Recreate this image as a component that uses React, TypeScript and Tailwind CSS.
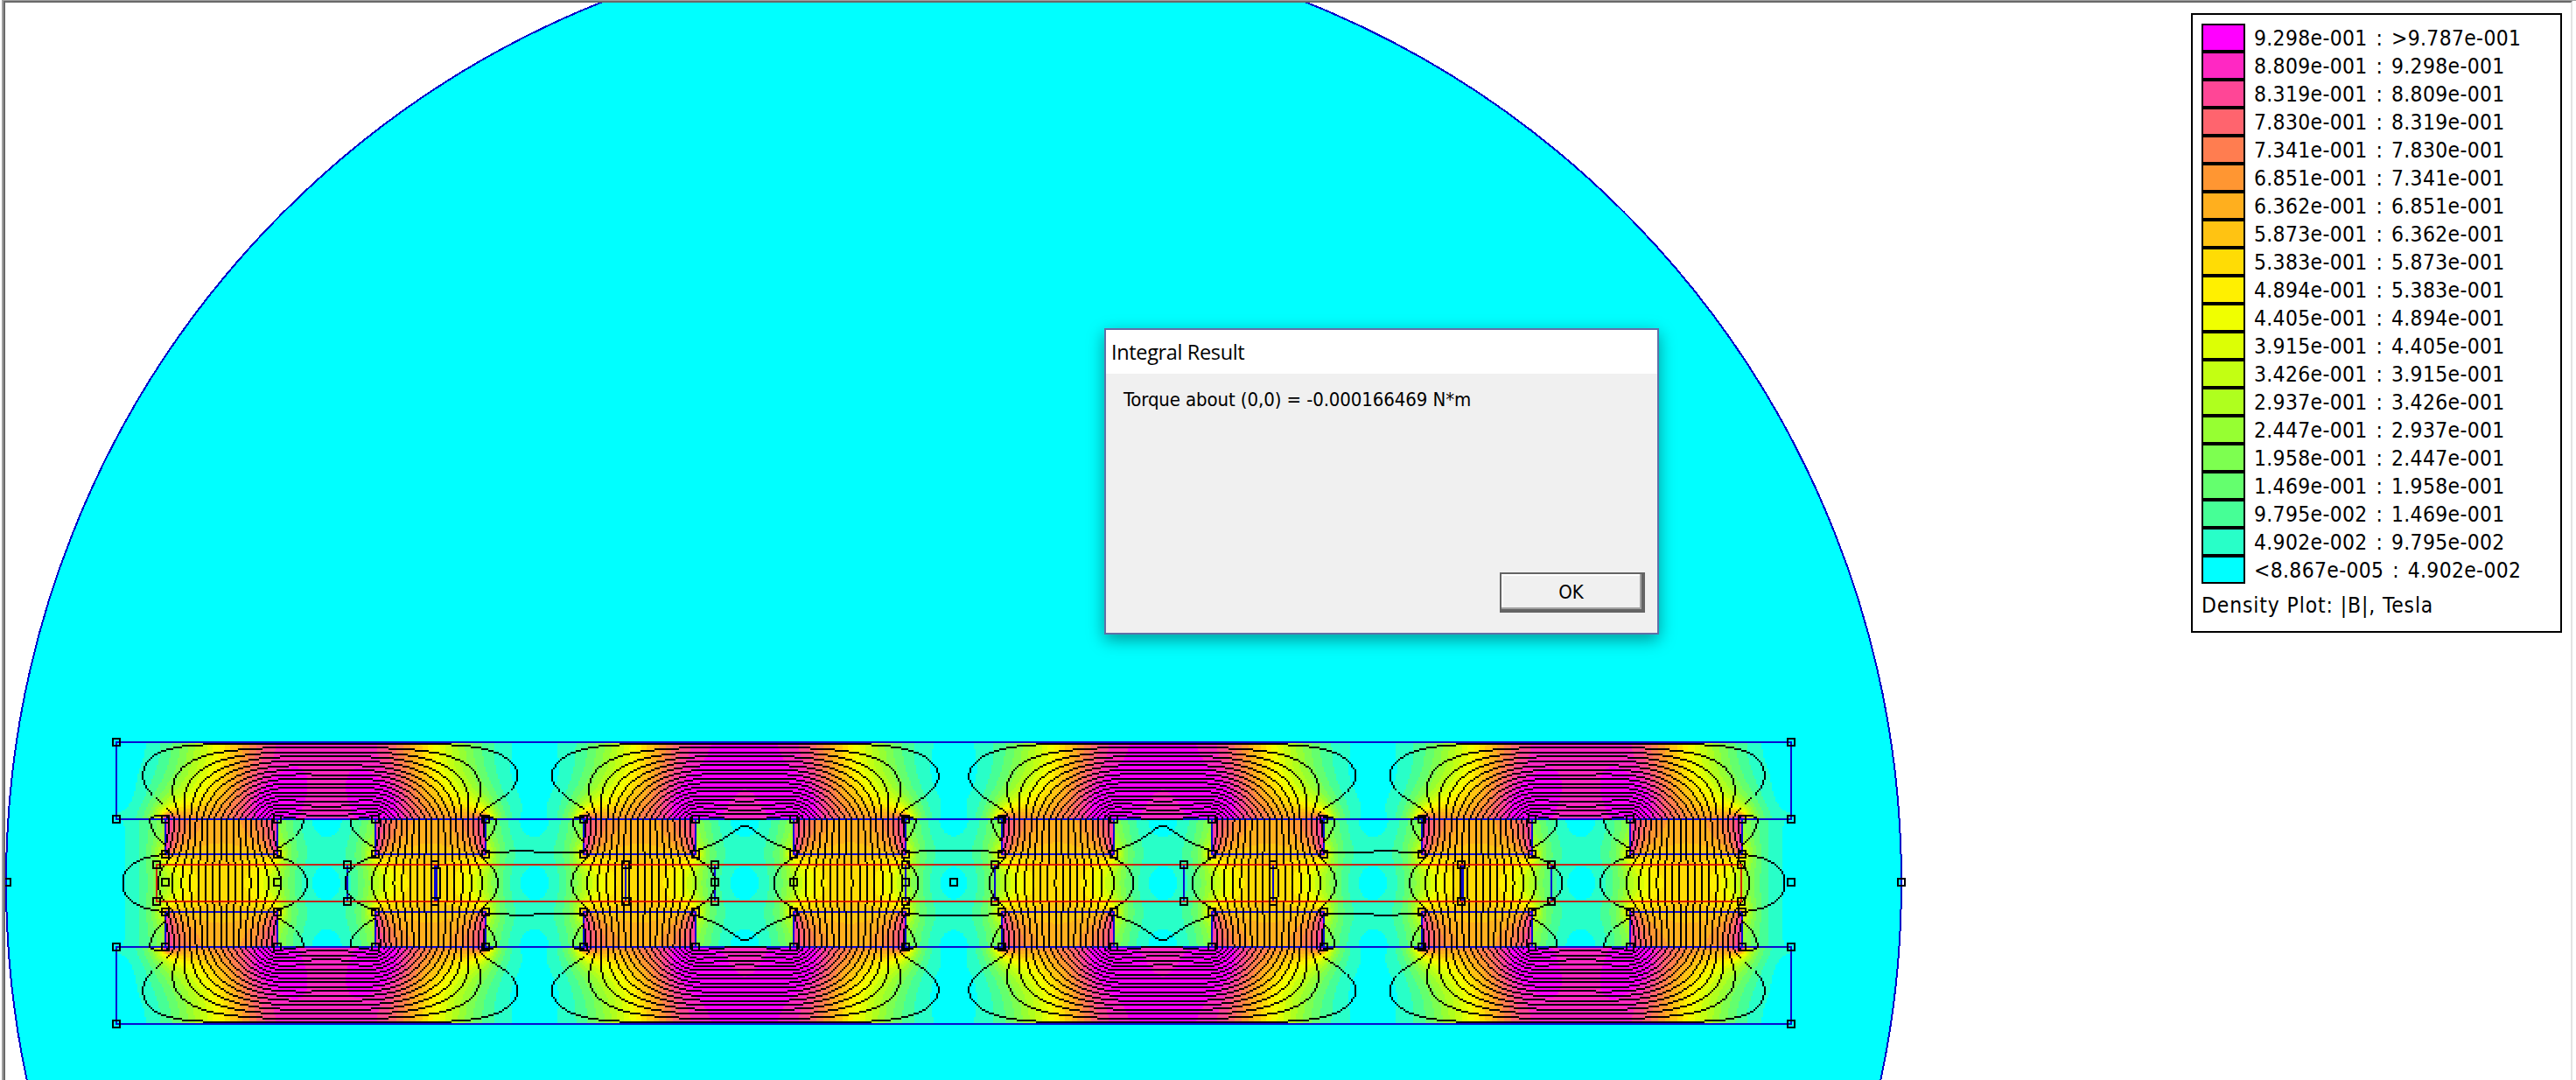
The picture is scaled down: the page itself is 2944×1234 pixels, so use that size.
const COLORS = [
  '#00ffff', '#28ffc8', '#46ff96', '#64ff6e', '#7dff50', '#96ff32', '#afff1e', '#c3ff12', '#dcff05', '#f0ff00',
  '#fff000', '#ffdc05', '#ffc312', '#ffaf1e', '#ff9632', '#ff7d50', '#ff646e', '#ff4696', '#ff28c3', '#ff00ff',
];

const LEGEND = [
  '9.298e-001 : >9.787e-001', '8.809e-001 : 9.298e-001', '8.319e-001 : 8.809e-001', '7.830e-001 : 8.319e-001',
  '7.341e-001 : 7.830e-001', '6.851e-001 : 7.341e-001', '6.362e-001 : 6.851e-001', '5.873e-001 : 6.362e-001',
  '5.383e-001 : 5.873e-001', '4.894e-001 : 5.383e-001', '4.405e-001 : 4.894e-001', '3.915e-001 : 4.405e-001',
  '3.426e-001 : 3.915e-001', '2.937e-001 : 3.426e-001', '2.447e-001 : 2.937e-001', '1.958e-001 : 2.447e-001',
  '1.469e-001 : 1.958e-001', '9.795e-002 : 1.469e-001', '4.902e-002 : 9.795e-002', '<8.867e-005 : 4.902e-002',
];

// Geometry, in plot pixels
const MAGNETS = [[189, 317], [429, 555], [667, 795], [907, 1035], [1145, 1273], [1385, 1513], [1625, 1751], [1863, 1991]];
const STRENGTH = [1.004, -1, 1.004, -1];
const CX2 = 2180;
const CY2 = 2018;

// Finite-difference solution of the vector potential on one quarter of the machine.
// Nodes lie every 2px; the two symmetry planes are natural boundaries.
const X0 = 31;
const Y0 = 768;
const NX = (1089 - X0) / 2 + 1;
const NY = (1008 - Y0) / 2 + 1;
const PROBE = Math.round((253 - X0) / 2);

const cellB = (A: Float64Array, i: number, j: number) => {
  const k = j * NX + i;
  const a = A[k], b = A[k + 1], c = A[k + NX], d = A[k + NX + 1];
  return Math.hypot((b - a + d - c) / 2, (c - a + d - b) / 2);
};

function solve() {
  const nu = new Float64Array(NX * NY).fill(1);
  const src = new Float64Array(NX * NY);
  const iron: number[][] = [];
  for (let j = 0; j < NY; j++) {
    const y = Y0 + 2 * j + 1;
    for (let i = 0; i < NX; i++) {
      const x = X0 + 2 * i + 1;
      if (y > 848 && y < 936 && x > 133) {
        nu[j * NX + i] = 1 / 3000;
        if (i < NX - 1) iron.push([i, j]);
      }
      if (y > 936 && y < 976) {
        MAGNETS.slice(0, 4).forEach(([a, b], m) => {
          const s = STRENGTH[m];
          if (x > a && x < b) nu[j * NX + i] = 1 / 1.05;
          const n = X0 + 2 * i;
          if (n === a) { src[j * NX + i] += s; src[(j + 1) * NX + i] += s; }
          if (n === b) { src[j * NX + i] -= s; src[(j + 1) * NX + i] -= s; }
        });
      }
    }
  }
  const A = new Float64Array(NX * (NY + 1));
  const E = new Float64Array(NX * NY);
  const S = new Float64Array(NX * NY);
  const couple = () => {
    for (let j = 1; j < NY; j++)
      for (let i = 1; i < NX; i++) {
        const k = j * NX + i;
        E[k] = i < NX - 1 ? (nu[k] + nu[k - NX]) / 2 : 0;
        S[k] = j < NY - 1 ? (nu[k] + nu[k - 1]) / 2 : 0;
      }
    for (let j = 1; j < NY; j++) E[j * NX] = 1;
    for (let i = 1; i < NX; i++) S[i] = 1;
  };
  const w = 1.987;
  for (let pass = 0; pass < 22; pass++) {
    couple();
    const sweeps = pass === 0 ? 1500 : 300;
    for (let it = 0; it < sweeps; it++)
      for (let j = 1; j < NY; j++)
        for (let i = 1; i < NX; i++) {
          const k = j * NX + i;
          const e = E[k], l = E[k - 1], s = S[k], n = S[k - NX];
          const v = l * A[k - 1] + n * A[k - NX] + e * A[k + 1] + s * A[k + NX] + src[k];
          A[k] += w * (v / (e + l + s + n) - A[k]);
        }
    // soft saturation of the yoke steel, driven by the local field strength
    if (pass < 18) {
      const scale = 0.572 / cellB(A, PROBE, NY - 3);
      for (const [i, j] of iron) {
        const k = j * NX + i;
        const h = cellB(A, i, j) * scale * nu[k] * 6000;
        const next = (1 + (h / 1.2) ** 2.2) ** (1 / 2.2) / 6000;
        nu[k] = Math.sqrt(nu[k] * next);
      }
    }
  }
  return A;
}

function build() {
  const A = solve();
  const at = (i: number, j: number) => A[Math.min(j, NY - 1) * NX + Math.min(i, NX - 1)];
  const scale = 0.572 / cellB(A, PROBE, NY - 3);

  const bands = COLORS.map(() => '');
  const put = (n: number, x: number, y: number, len: number) => {
    const r = `h${len}v2h${-len}z`;
    bands[n] += `M${x} ${y}${r}M${x} ${CY2 - y - 2}${r}M${CX2 - x - len} ${y}${r}M${CX2 - x - len} ${CY2 - y - 2}${r}`;
  };
  for (let j = 0; j < NY; j++) {
    let start = 0;
    let prev = -1;
    for (let i = 0; i <= NX; i++) {
      const b = cellB(A, Math.min(i, NX - 2), Math.min(j, NY - 2)) * scale;
      const n = i === NX ? -1 : Math.min(19, Math.floor(b / 0.04893));
      if (n !== prev) {
        if (prev > 0) put(prev, X0 + 2 * start, Y0 + 2 * j, 2 * (i - start));
        start = i;
        prev = n;
      }
    }
  }

  let lo = 0;
  let hi = 0;
  for (const v of A) { if (v < lo) lo = v; if (v > hi) hi = v; }
  const step = (hi - lo) / 20;
  lo += step * 0.25;
  const seen = new Set<number>();
  let lines = '';
  const dot = (i: number, j: number) => {
    const k = j * NX + i;
    if (seen.has(k)) return;
    seen.add(k);
    const x = X0 + 2 * i - 1, y = Y0 + 2 * j - 1, r = 'h2v2h-2z';
    lines += `M${x} ${y}${r}M${x} ${CY2 - y - 2}${r}M${CX2 - x - 2} ${y}${r}M${CX2 - x - 2} ${CY2 - y - 2}${r}`;
  };
  const level = (v: number) => Math.max(0, Math.floor((v - lo) / step));
  for (let j = 1; j < NY; j++)
    for (let i = 1; i < NX; i++) {
      const a = at(i, j), r = at(i + 1, j), b = at(i, j + 1);
      const gx = Math.abs(r - a), gy = Math.abs(b - a);
      if (level(a) !== level(r) && (gx >= gy || level(a) === level(b))) {
        const t = (Math.max(level(a), level(r)) * step + lo - a) / (r - a);
        if (gx >= gy * 0.95) dot(t > 0.5 ? i + 1 : i, j);
      } else if (gy > gx && level(a) !== level(b)) {
        const t = (Math.max(level(a), level(b)) * step + lo - a) / (b - a);
        dot(i, t > 0.5 ? j + 1 : j);
      }
    }
  return { bands, lines };
}

const FIELD = build();

const NODES: number[][] = [
  ...MAGNETS.flatMap(([a, b]) => [936, 976, 1042, 1082].flatMap((y) => [[a, y], [b, y]])),
  ...[848, 936, 1082, 1170].flatMap((y) => [[133, y], [2047, y]]),
  ...[179, 397, 497, 715, 817, 1035, 1137, 1353, 1455, 1670, 1773, 1990].flatMap((x) => [[x, 988], [x, 1030]]),
  ...[8, 189, 317, 817, 907, 1035, 1090, 2047, 2173].map((x) => [x, 1008]),
];

function Plot() {
  return (
    <svg width="2934" height="1231" viewBox="6 3 2934 1231" shapeRendering="crispEdges" className="block">
      <circle cx="1090" cy="1008" r="1083" fill="#00ffff" stroke="#0000c8" strokeWidth="2" />
      {FIELD.bands.map((d, i) => <path key={i} d={d} fill={COLORS[i]} />)}
      <g fill="none" stroke="#0a0ad2" strokeWidth="2">
        <rect x="133" y="848" width="1914" height="88" />
        <rect x="133" y="1082" width="1914" height="88" />
        {MAGNETS.map(([a, b]) => (
          <g key={a}>
            <rect x={a} y="936" width={b - a} height="40" />
            <rect x={a} y="1042" width={b - a} height="40" />
          </g>
        ))}
        {[397, 715, 817, 1035, 1137, 1353, 1455, 1773].map((x) => <path key={x} d={`M${x} 988V1030`} />)}
        {[498, 1671].map((x) => <path key={x} d={`M${x} 988V1030`} strokeWidth="4" />)}
      </g>
      <path d={FIELD.lines} fill="#000" />
      <rect x="179" y="988" width="1811" height="42" fill="none" stroke="#dc0000" strokeOpacity="0.85" strokeWidth="2" />
      <g fill="none" stroke="#000" strokeWidth="2">
        {NODES.map(([x, y], i) => <rect key={i} x={x - 4} y={y - 4} width="8" height="8" />)}
      </g>
    </svg>
  );
}

function Legend() {
  return (
    <div className="absolute left-[2504px] top-[15px] flex h-[708px] w-[424px] flex-col border-2 border-black bg-white pl-[10px] pt-[10px] text-[24.4px] leading-8 tracking-[0.35px] text-black [word-spacing:2.5px]">
      {LEGEND.map((t, i) => (
        <div key={t} className="flex h-8 items-center gap-[10px]">
          <div className="h-8 w-[50px] border-2 border-black" style={{ background: COLORS[19 - i] }} />
          <span className="whitespace-pre pt-[2px]">{t}</span>
        </div>
      ))}
      <div className="mt-[9px] whitespace-pre tracking-[0.9px] [word-spacing:0px]">Density Plot: |B|, Tesla</div>
    </div>
  );
}

function Dialog() {
  return (
    <div className="absolute left-[1262px] top-[375px] flex h-[350px] w-[634px] flex-col border-2 border-[#6070a8] bg-[#f0f0f0] text-black shadow-[0_6px_18px_rgba(0,0,0,0.4)]">
      <div className="flex h-[50px] items-center bg-white pl-[6px] pt-[2px] font-['Open_Sans'] text-[23.5px] tracking-[-0.35px] [font-stretch:normal]">Integral Result</div>
      <div className="pl-[20px] pt-[16px] text-[22px] leading-[28px] tracking-[-0.1px]">Torque about (0,0) = -0.000166469 N*m</div>
      <button className="mb-[23px] ml-auto mr-[14px] mt-auto h-[46px] w-[166px] border-2 border-[#646464] pb-[2px] pr-[3px] text-[22px] shadow-[inset_-2px_-2px_0_#646464,inset_-4px_-4px_0_#a0a0a0,inset_2px_2px_0_#ffffff]">OK</button>
    </div>
  );
}

export default function App() {
  return (
    <div className="relative h-[1234px] w-[2944px] overflow-hidden bg-white font-['DejaVu_Sans_Condensed','DejaVu_Sans',sans-serif] [font-stretch:condensed]">
      <div className="h-[1234px] border-l-2 border-white">
        <div className="h-full border-l-2 border-t border-[#a0a0a0]">
          <div className="h-full w-[2936px] border-l-2 border-t-2 border-r-2 border-[#696969] border-r-[#e3e3e3]">
            <Plot />
          </div>
        </div>
      </div>
      <Legend />
      <Dialog />
    </div>
  );
}
